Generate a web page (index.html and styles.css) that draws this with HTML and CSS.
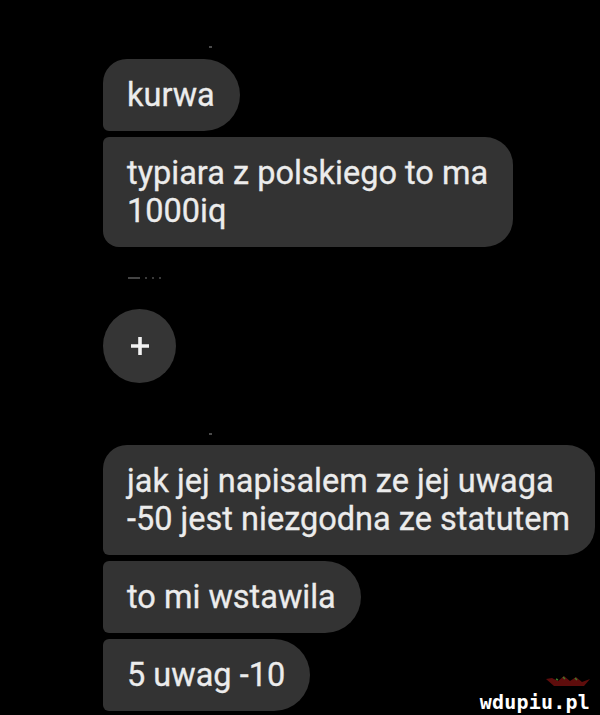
FILE: index.html
```html
<!DOCTYPE html>
<html lang="pl">
<head>
  <meta charset="UTF-8" />
  <meta name="viewport" content="width=device-width, initial-scale=1.0"/>
  <title>Czat</title>
  <link rel="stylesheet" href="styles.css">
</head>
<body>
  <div class="thread">
    <div class="seen"></div>

    <div class="group">
      <div class="bubble first single">kurwa</div>
      <div class="bubble last">typiara z polskiego to ma<br>1000iq</div>
    </div>

    <div class="typing"><span class="dash"></span><span></span><span></span><span></span></div>

    <div class="add">
      <svg width="20" height="20" viewBox="0 0 20 20">
        <path d="M10 1v18M1 10h18" stroke="#f2f2f2" stroke-width="3.6" fill="none"/>
      </svg>
    </div>

    <div class="seen seen-low"></div>

    <div class="group">
      <div class="bubble first">jak jej napisalem ze jej uwaga<br>-50 jest niezgodna ze statutem</div>
      <div class="bubble single">to mi wstawila</div>
      <div class="bubble single">5 uwag -10</div>
    </div>
  </div>

  <div class="watermark">
    <svg class="crown" width="44" height="11" viewBox="0 0 44 11">
      <path d="M0 3 L8 10 L38 10 L44 3 L36 6 L30 1 L24 5 L18 0 L12 5 L6 2 Z" fill="#5e0d0c"/>
      <path d="M17 1 l2 2 M29 2 l2 2 M10 3 l2 1" stroke="#3f7a2a" stroke-width="1.5"/>
    </svg>
    <span class="brand">wdupiu.pl</span>
  </div>
</body>
</html>
```

FILE: styles.css
```css
body {
  margin: 0;
  background: #000;
  font-family: Roboto, "Liberation Sans", sans-serif;
  height: 715px;
  overflow: hidden;
  position: relative;
}

.thread {
  display: flex;
  flex-direction: column;
  align-items: flex-start;
  padding: 46px 0 0 103px;
}

.seen {
  width: 3px;
  height: 2px;
  margin: 0 0 11px 106px;
  background: #4a4a4a;
}
.seen-low {
  margin: 50px 0 10px 106px;
}

.group {
  display: flex;
  flex-direction: column;
  align-items: flex-start;
  gap: 6px;
}

.bubble {
  background: #333333;
  color: #ececec;
  font-size: 32.5px;
  line-height: 38px;
  -webkit-text-stroke: 0.3px #ececec;
  padding: 17px 25px 17px 24px;
  border-radius: 6px 28px 28px 6px;
}
.bubble.single {
  border-radius: 6px 36px 36px 6px;
}
.bubble.first {
  border-top-left-radius: 24px;
}
.bubble.last {
  border-bottom-left-radius: 16px;
}

.typing {
  display: flex;
  align-items: center;
  gap: 5px;
  height: 3px;
  margin: 29px 0 0 25px;
}
.typing span {
  width: 2px;
  height: 2px;
  background: #3a3a3a;
}
.typing .dash {
  width: 12px;
  background: #444;
}

.add {
  width: 73px;
  height: 74px;
  margin-top: 30px;
  border-radius: 50%;
  background: #353535;
  display: flex;
  align-items: center;
  justify-content: center;
}

/* site stamp in the bottom right corner */
.watermark {
  position: absolute;
  right: 10px;
  bottom: 3px;
  display: flex;
  flex-direction: column;
  align-items: flex-end;
}
.crown {
  margin: 0 0 5px 0;
}
.brand {
  font-family: "DejaVu Sans Mono", monospace;
  font-weight: bold;
  font-size: 20px;
  line-height: 20px;
  color: #fff;
  letter-spacing: 0.2px;
}
```
